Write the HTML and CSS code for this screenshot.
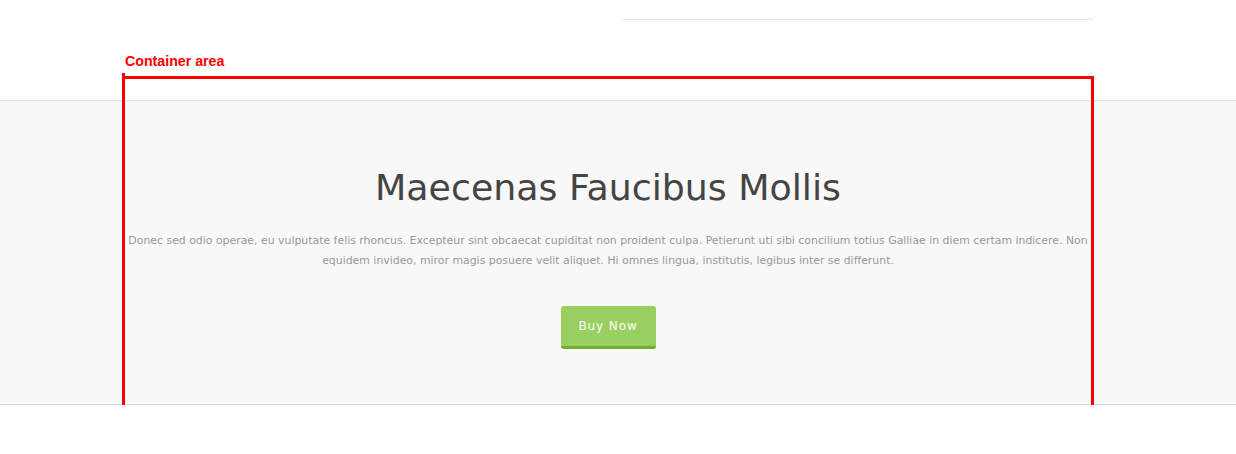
FILE: index.html
```html
<!DOCTYPE html>
<html>
<head>
<meta charset="utf-8">
<link rel="stylesheet" href="styles.css">
</head>
<body>
<div class="topbar"><div class="topline"></div></div>
<div class="label-row"><span class="label">Container area</span></div>
<section class="hero">
  <div class="container">
    <h1 class="title">Maecenas Faucibus Mollis</h1>
    <p class="lead">Donec sed odio operae, eu vulputate felis rhoncus. Excepteur sint obcaecat cupiditat non proident culpa. Petierunt uti sibi concilium totius Galliae in diem certam indicere. Non equidem invideo, miror magis posuere velit aliquet. Hi omnes lingua, institutis, legibus inter se differunt.</p>
    <a class="btn" href="#">Buy Now</a>
  </div>
</section>
<div class="outline"></div>
</body>
</html>
```
FILE: styles.css
```css
html, body {
  margin: 0;
  padding: 0;
  background: #fff;
}
body {
  position: relative;
  font-family: "DejaVu Sans", sans-serif;
  width: 1236px;
  height: 454px;
  overflow: hidden;
}
.topbar {
  height: 20px;
  display: flex;
  align-items: flex-end;
}
.topline {
  margin-left: 623px;
  width: 470px;
  height: 1px;
  background: #e3e3e3;
}
.label-row {
  height: 80px;
  padding-left: 125px;
  box-sizing: border-box;
  padding-top: 33px;
}
.label {
  font-family: "Liberation Sans", Arial, sans-serif;
  font-weight: bold;
  font-size: 14.2px;
  color: #ff0000;
  line-height: 17px;
  display: block;
}
.hero {
  background: #f8f8f8;
  border-top: 1px solid #dedede;
  border-bottom: 1px solid #dedede;
  height: 305px;
  box-sizing: border-box;
}
.container {
  width: 966px;
  margin-left: 125px;
  text-align: center;
  padding-top: 64px;
}
.title {
  margin: 0;
  font-weight: normal;
  font-size: 36.3px;
  line-height: 46px;
  color: #444;
}
.lead {
  margin: 20px 0 0;
  font-size: 10.9px;
  line-height: 20px;
  color: #999;
}
.btn {
  display: inline-block;
  margin-top: 35px;
  width: 95px;
  height: 43px;
  box-sizing: border-box;
  background: #98cf5e;
  border-bottom: 3px solid #72ad33;
  border-radius: 3px;
  color: #fff;
  text-decoration: none;
  font-size: 12px;
  letter-spacing: 0.9px;
  line-height: 40px;
}
.outline {
  position: absolute;
  left: 122px;
  top: 76px;
  width: 972px;
  height: 329px;
  box-sizing: border-box;
  border: 3px solid #ff0000;
  border-bottom: 0;
}
.outline::before {
  content: "";
  position: absolute;
  left: -3px;
  top: -6px;
  width: 3px;
  height: 3px;
  background: #ff0000;
}
```
